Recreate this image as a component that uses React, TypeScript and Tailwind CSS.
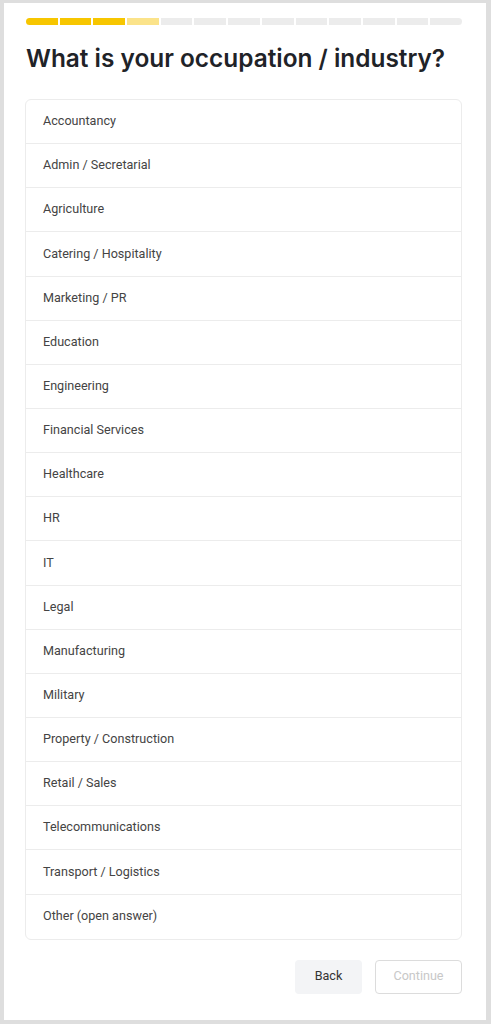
import React from 'react';

const options = [
  'Accountancy',
  'Admin / Secretarial',
  'Agriculture',
  'Catering / Hospitality',
  'Marketing / PR',
  'Education',
  'Engineering',
  'Financial Services',
  'Healthcare',
  'HR',
  'IT',
  'Legal',
  'Manufacturing',
  'Military',
  'Property / Construction',
  'Retail / Sales',
  'Telecommunications',
  'Transport / Logistics',
  'Other (open answer)',
];

const steps = ['done', 'done', 'done', 'current', 'todo', 'todo', 'todo', 'todo', 'todo', 'todo', 'todo', 'todo', 'todo'];

export default function App() {
  return (
    <div className="min-h-screen bg-[#dedede] pt-[3px] pb-[4px] pl-[4px] pr-[5px] font-['Roboto',sans-serif]">
      <div className="h-[1017px] bg-white pl-[22px] pr-[24px] pt-[15px]">
        {/* Progress */}
        <div className="flex h-[7px] gap-[2px] overflow-hidden rounded-full">
          {steps.map((s, i) => (
            <div
              key={i}
              className={`flex-1 ${
                s === 'done' ? 'bg-[#f7c600]' : s === 'current' ? 'bg-[#fbe38a]' : 'bg-[#ececec]'
              }`}
            />
          ))}
        </div>

        <h1 className="mt-[17px] font-['Inter',sans-serif] text-[24.4px] font-semibold leading-[32px] text-[#1f2328]">
          What is your occupation / industry?
        </h1>

        <div className="mt-[25px] -ml-px overflow-hidden rounded-[6px] border border-[#ececec]">
          {options.map((o, i) => (
            <div
              key={o}
              className={`flex h-[44.15px] items-center pl-[17px] text-[12.6px] text-[#444] ${
                i < options.length - 1 ? 'border-b border-[#ececec]' : ''
              }`}
            >
              {o}
            </div>
          ))}
        </div>

        <div className="mt-[20px] flex justify-end gap-[13px]">
          <button className="h-[34px] w-[67px] rounded-[4px] bg-[#f3f4f6] text-[12.6px] text-[#333]">Back</button>
          <button className="h-[34px] w-[87px] rounded-[4px] border border-[#dcdcdc] bg-white text-[12.6px] text-[#c8c8c8]">
            Continue
          </button>
        </div>
      </div>
    </div>
  );
}
